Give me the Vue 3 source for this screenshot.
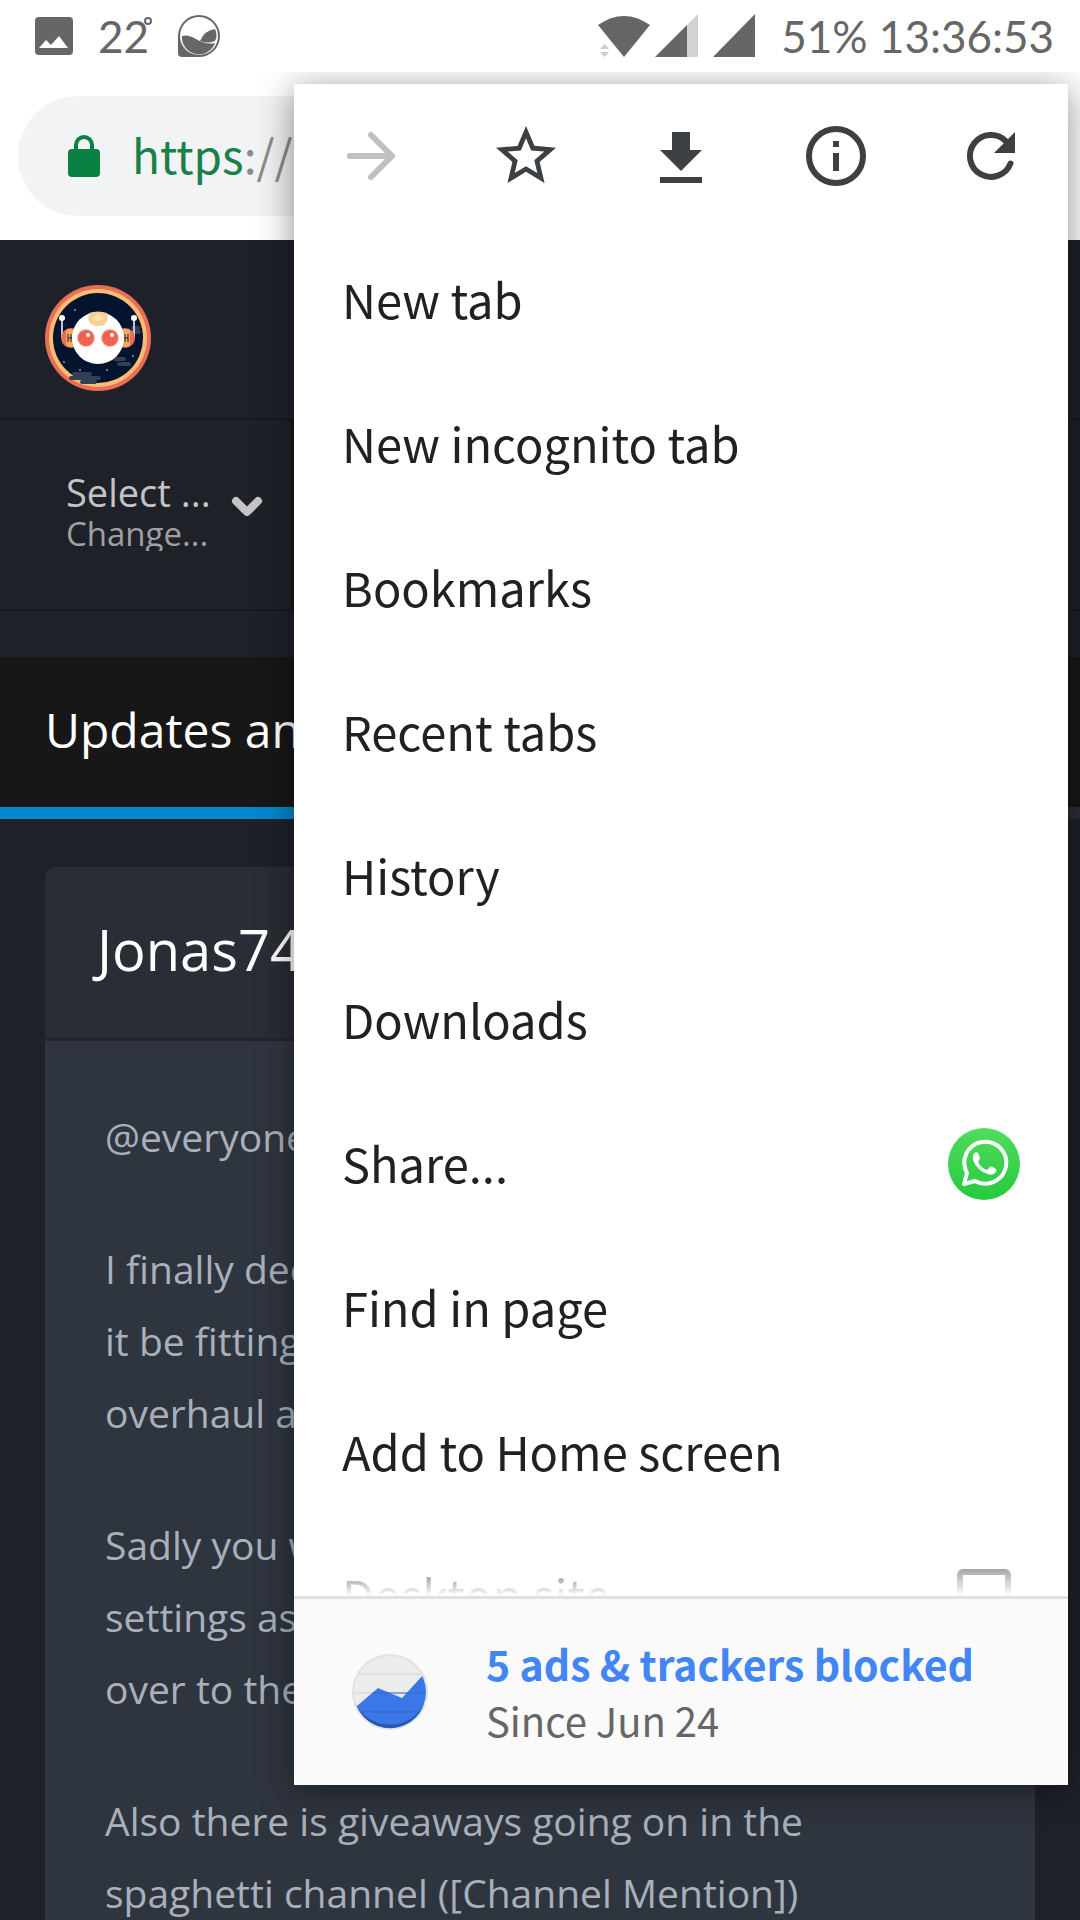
<script setup>
const menuItems = [
  'New tab',
  'New incognito tab',
  'Bookmarks',
  'Recent tabs',
  'History',
  'Downloads',
  'Share...',
  'Find in page',
  'Add to Home screen',
]

const paragraphs = [
  ['@everyone'],
  ['I finally decided', 'it be fitting', 'overhaul a'],
  ['Sadly you will', 'settings as', 'over to the'],
  ['Also there is giveaways going on in the', 'spaghetti channel ([Channel Mention])'],
]
</script>

<template>
  <div class="screen">
    <header class="status">
      <div class="status-left">
        <svg width="40" height="40" viewBox="0 0 40 40" aria-hidden="true">
          <rect x="1" y="1" width="38" height="38" rx="4" fill="#666" />
          <path d="M5 32L12 24L17 29L25 20L34 32Z" fill="#fff" />
        </svg>
        <span class="temp">22<svg class="degree" width="10" height="10" viewBox="0 0 10 10" aria-label="degrees"><circle cx="5" cy="5" r="3" fill="none" stroke="#666" stroke-width="2" /></svg></span>
        <svg width="44" height="44" viewBox="0 0 44 44" aria-hidden="true">
          <path d="M22 1A21 21 0 1 1 22 43H5Q1 43 1 39V22A21 21 0 0 1 22 1Z" fill="#666" />
          <circle cx="22" cy="22" r="19" fill="#fff" />
          <path d="M5 22Q11 20 19 25Q29 31 38 29A17 17 0 0 1 5 22Z" fill="#666" />
          <path d="M23 27Q28 16 38 15Q41 22 38 27Q30 30 23 27Z" fill="#666" />
        </svg>
      </div>
      <div class="status-right">
        <svg width="160" height="44" viewBox="0 0 160 44" aria-hidden="true">
          <path d="M1 11Q27 -7 53 11L27 43Z" fill="#666" />
          <path d="M3 35L7.500 30L12 35ZM3 38H12L7.500 43Z" fill="#ccc" />
          <path d="M90 11L101 0V43H90Z" fill="#d2d2d2" />
          <path d="M58 43L90 11V43Z" fill="#666" />
          <path d="M116 43L158 0V43Z" fill="#666" />
        </svg>
        <span class="clock">51% 13:36:53</span>
      </div>
    </header>

    <div class="browser">
      <div class="toolbar">
        <div class="omnibox">
          <svg width="32" height="42" viewBox="0 0 32 42" aria-hidden="true">
            <rect x="0" y="14" width="32" height="28" rx="4" fill="#0b8043" />
            <path d="M8 16V10A8 8 0 0 1 24 10V16" fill="none" stroke="#0b8043" stroke-width="4" />
          </svg>
          <span class="url"><span class="scheme">https</span>://</span>
        </div>
      </div>

      <main class="site">
        <div class="brand">
          <svg width="106" height="106" viewBox="0 0 106 106" role="img" aria-label="Robot logo">
            <circle cx="53" cy="53" r="53" fill="#ea6e57" />
            <circle cx="53" cy="53" r="49" fill="#f9bd72" />
            <circle cx="53" cy="53" r="45" fill="#04142f" />
            <g stroke="#323f54" stroke-width="4" stroke-linecap="round">
              <path d="M29 89H45M26 93H54M37 97H50M70 74H79M74 79H84M85 47H94M88 43H93" />
            </g>
            <g fill="#8c98a8">
              <circle cx="30" cy="25" r="1" /><circle cx="19" cy="77" r="1" /><circle cx="62" cy="85" r="1" />
              <circle cx="88" cy="71" r="1" /><circle cx="35" cy="85" r="1" />
            </g>
            <path d="M17 34V53M89 34V53" stroke="#bfc6d0" stroke-width="2" />
            <circle cx="17" cy="33" r="3" fill="#fff" /><circle cx="89" cy="33" r="3" fill="#fff" />
            <circle cx="26" cy="53" r="10" fill="#ea6e57" /><circle cx="80" cy="53" r="10" fill="#ea6e57" />
            <rect x="21" y="44" width="9" height="18" rx="3" fill="#f2a75c" />
            <rect x="76" y="44" width="9" height="18" rx="3" fill="#f2a75c" />
            <path d="M23 49V57M26 49V57M80 49V57M83 49V57M23 53H27M79 53H83" stroke="#222" stroke-width="1" />
            <circle cx="53" cy="53" r="26" fill="#fff" />
            <path d="M44 28Q53 25 62 28Q65 41 53 41Q41 41 44 28Z" fill="#f6cf96" />
            <ellipse cx="53" cy="33" rx="5" ry="3" fill="#fae0b6" />
            <circle cx="41" cy="53" r="9" fill="#f7b9a0" /><circle cx="65" cy="53" r="9" fill="#f7b9a0" />
            <circle cx="41" cy="53" r="8" fill="#ee6352" /><circle cx="65" cy="53" r="8" fill="#ee6352" />
            <circle cx="43" cy="50" r="2" fill="#fff" /><circle cx="67" cy="50" r="2" fill="#fff" />
          </svg>
        </div>

        <div class="selector">
          <button type="button" class="server">
            <span class="server-text">
              <span class="server-name">Select ...</span>
              <span class="server-hint">Change...</span>
            </span>
            <svg width="32" height="22" viewBox="0 0 32 22" aria-hidden="true">
              <path d="M5 5L16 16L27 5" fill="none" stroke="#c4c4c6" stroke-width="8" stroke-linejoin="round" stroke-linecap="round" />
            </svg>
          </button>
        </div>

        <div class="tabs"><a href="#updates" class="tab">Updates and</a></div>

        <article class="card">
          <h2 class="card-title">Jonas74</h2>
          <div class="card-body">
            <p v-for="(lines, i) in paragraphs" :key="i">
              <span v-for="line in lines" :key="line" class="line">{{ line }}</span>
            </p>
          </div>
        </article>
      </main>
    </div>

    <nav class="menu" aria-label="Browser menu">
      <div class="actions">
        <button type="button" aria-label="Forward" disabled>
          <svg viewBox="0 0 24 24"><path d="M5 12H19M12 5L19 12L12 19" fill="none" stroke="#c0c0c0" stroke-width="2" stroke-linecap="round" stroke-linejoin="round" /></svg>
        </button>
        <button type="button" aria-label="Bookmark">
          <svg viewBox="0 0 24 24"><path d="M22 9.240l-7.190-.62L12 2 9.190 8.630 2 9.240l5.460 4.730L5.820 21 12 17.270 18.180 21l-1.630-7.030L22 9.240zM12 15.400l-3.760 2.270 1-4.280-3.320-2.880 4.380-.38L12 6.100l1.710 4.040 4.380.38-3.320 2.880 1 4.280L12 15.400z" fill="#3c4043" /></svg>
        </button>
        <button type="button" aria-label="Download">
          <svg viewBox="0 0 24 24"><path d="M19 10H15V4H9V10H5L12 17ZM5 19V21H19V19Z" fill="#3c4043" /></svg>
        </button>
        <button type="button" aria-label="Page info">
          <svg viewBox="0 0 24 24"><circle cx="12" cy="12" r="9" fill="none" stroke="#3c4043" stroke-width="2" /><path d="M11 7H13V9H11ZM11 11H13V17H11Z" fill="#3c4043" /></svg>
        </button>
        <button type="button" aria-label="Reload">
          <svg viewBox="0 0 24 24"><path d="M17 7.100A7 7 0 1 0 18.500 14.500" fill="none" stroke="#3c4043" stroke-width="2" stroke-linecap="round" /><path d="M20 4V11H13Z" fill="#3c4043" /></svg>
        </button>
      </div>

      <div class="list">
        <button v-for="item in menuItems" :key="item" type="button" class="item">
          <span class="item-text">{{ item }}</span>
          <svg v-if="item === 'Share...'" width="72" height="72" viewBox="0 0 72 72" role="img" aria-label="WhatsApp">
            <defs>
              <linearGradient id="wa" x1="0" y1="0" x2="0" y2="1">
                <stop offset="0" stop-color="#50dc5c" /><stop offset="1" stop-color="#28c840" />
              </linearGradient>
            </defs>
            <circle cx="36" cy="36" r="36" fill="url(#wa)" />
            <path d="M16 56L19 45A21 21 0 1 1 27 53Z" fill="none" stroke="#fff" stroke-width="4" stroke-linejoin="round" />
            <path d="M28 24Q30 24 31 27L32 30Q32 31 30 34Q33 40 39 42L42 39Q43 38 45 39L48 41Q49 42 48 44Q45 48 40 46Q29 43 25 32Q24 26 28 24Z" fill="#fff" />
          </svg>
        </button>
        <label class="item">
          <span class="item-text">Desktop site</span>
          <input type="checkbox" class="check" />
        </label>
      </div>

      <button type="button" class="blocked">
        <svg width="80" height="80" viewBox="0 0 80 80" aria-hidden="true">
          <defs><clipPath id="disc"><circle cx="40" cy="40" r="36" /></clipPath></defs>
          <circle cx="40" cy="40" r="38" fill="#dfe1e4" />
          <g clip-path="url(#disc)">
            <rect width="80" height="80" fill="#ececec" />
            <path d="M0 22H80M0 41H80" stroke="#d2d2d2" stroke-width="1" />
            <path d="M0 60L28 36L52 46L74 22H80V80H0Z" fill="#3a78e7" />
            <path d="M22 41H80M0 60H80" stroke="#3269ce" stroke-width="1" />
          </g>
          <path d="M6 52A36 36 0 0 0 74 52A37 34 0 0 1 6 52Z" fill="#2a57ab" />
        </svg>
        <span class="blocked-text">
          <strong>5 ads &amp; trackers blocked</strong>
          <span class="since">Since Jun 24</span>
        </span>
      </button>
    </nav>
  </div>
</template>

<style>
body {
  margin: 0;
}
</style>

<style scoped>
.screen {
  position: relative;
  height: 100vh;
  overflow: hidden;
  display: flex;
  flex-direction: column;
  background: #1f2129;
  font-family: "Noto Sans CJK SC", "Noto Sans", sans-serif;
}

button {
  border: 0;
  padding: 0;
  background: none;
  font: inherit;
  color: inherit;
  text-align: left;
}

svg {
  display: block;
  flex: none;
}

.status {
  position: relative;
  z-index: 2;
  flex: none;
  box-sizing: border-box;
  height: 72px;
  padding: 0 26px 0 34px;
  display: flex;
  justify-content: space-between;
  align-items: center;
  background: #fff;
  color: #666;
  font-family: Lato, sans-serif;
}

.status-left,
.status-right {
  display: flex;
  align-items: center;
  gap: 24px;
}

.temp {
  display: flex;
  font-size: 44px;
  line-height: 48px;
}

.degree {
  margin: 4px 0 0 -6px;
}

.clock {
  font-size: 44px;
  line-height: 48px;
}

.browser {
  flex: none;
}

.toolbar {
  box-sizing: border-box;
  height: 168px;
  padding: 24px 18px;
  background: #fff;
}

.omnibox {
  height: 120px;
  padding-left: 50px;
  display: flex;
  align-items: center;
  gap: 32px;
  border-radius: 60px;
  background: #f1f3f4;
}

.url {
  padding-bottom: 4px;
  color: #8a8a8a;
  font-size: 46px;
}

.scheme {
  color: #188048;
}

.site {
  font-family: "Open Sans", sans-serif;
}

.brand {
  box-sizing: border-box;
  height: 180px;
  padding: 45px 45px 0;
  border-bottom: 2px solid #17191e;
}

.selector {
  height: 189px;
  border-bottom: 2px solid #17191e;
  margin-bottom: 46px;
  display: flex;
}

.server {
  box-sizing: border-box;
  width: 294px;
  padding: 46px 28px 0 66px;
  display: flex;
  align-items: flex-start;
  justify-content: space-between;
  border-right: 3px solid #141519;
}

.server > svg {
  margin-top: 30px;
}

.server-text {
  height: 85px;
  overflow: hidden;
  display: flex;
  flex-direction: column;
}

.server-name {
  color: #c4c4c6;
  font-size: 38px;
  line-height: 52px;
}

.server-hint {
  color: #a0a0a4;
  font-size: 33px;
  line-height: 32px;
}

.tabs {
  display: flex;
  height: 162px;
  background: linear-gradient(#171717 150px, #2b2e35 150px);
}

.tab {
  box-sizing: border-box;
  width: 50%;
  padding: 40px 0 0 45px;
  border-bottom: 12px solid #0387cf;
  color: #fff;
  font-size: 48px;
  line-height: 66px;
  text-decoration: none;
}

.card {
  margin: 48px 45px 0;
  border-radius: 12px;
  background: #2f353f;
}

.card-title {
  box-sizing: border-box;
  height: 174px;
  margin: 0;
  padding: 42px 52px 0;
  border-bottom: 3px solid #23262e;
  border-radius: 12px 12px 0 0;
  background: #2b2d36;
  color: #fff;
  font-size: 56px;
  line-height: 80px;
  font-weight: 400;
}

.card-body {
  padding: 60px;
  color: #a9b0bb;
  font-size: 39px;
  line-height: 72px;
}

.card-body p {
  margin: 0 0 60px;
}

.line {
  display: block;
  white-space: nowrap;
}

.menu {
  position: absolute;
  z-index: 1;
  top: 84px;
  right: 12px;
  bottom: 135px;
  width: 774px;
  max-width: calc(100% - 24px);
  display: flex;
  flex-direction: column;
  border-radius: 3px;
  background: #fff;
  box-shadow: 0 6px 36px rgba(0, 0, 0, 0.45);
  color: #212121;
}

.actions {
  flex: none;
  display: flex;
  height: 144px;
}

.actions button {
  flex: 1;
  display: flex;
  align-items: center;
  justify-content: center;
}

.actions svg {
  width: 72px;
  height: 72px;
}

.list {
  flex: 1;
  min-height: 0;
  overflow: hidden;
  display: flex;
  flex-direction: column;
  mask-image: linear-gradient(to top, transparent, #000 48px);
}

.item {
  flex: none;
  height: 144px;
  padding: 0 48px;
  display: flex;
  align-items: center;
  justify-content: space-between;
  font-size: 47px;
}

.item-text {
  padding-bottom: 4px;
}

.check {
  appearance: none;
  box-sizing: border-box;
  width: 54px;
  height: 54px;
  margin: 0 9px;
  border: 6px solid #5f6368;
  border-radius: 6px;
}

.blocked {
  flex: none;
  height: 189px;
  padding: 0 56px;
  display: flex;
  align-items: center;
  gap: 56px;
  border-top: 3px solid #e0e0e0;
  background: #fafafa;
}

.blocked-text {
  display: flex;
  flex-direction: column;
  color: #666;
  font-size: 41px;
  line-height: 57px;
}

.blocked-text strong {
  color: #4285f4;
}

.since {
  font-size: 40px;
}
</style>
